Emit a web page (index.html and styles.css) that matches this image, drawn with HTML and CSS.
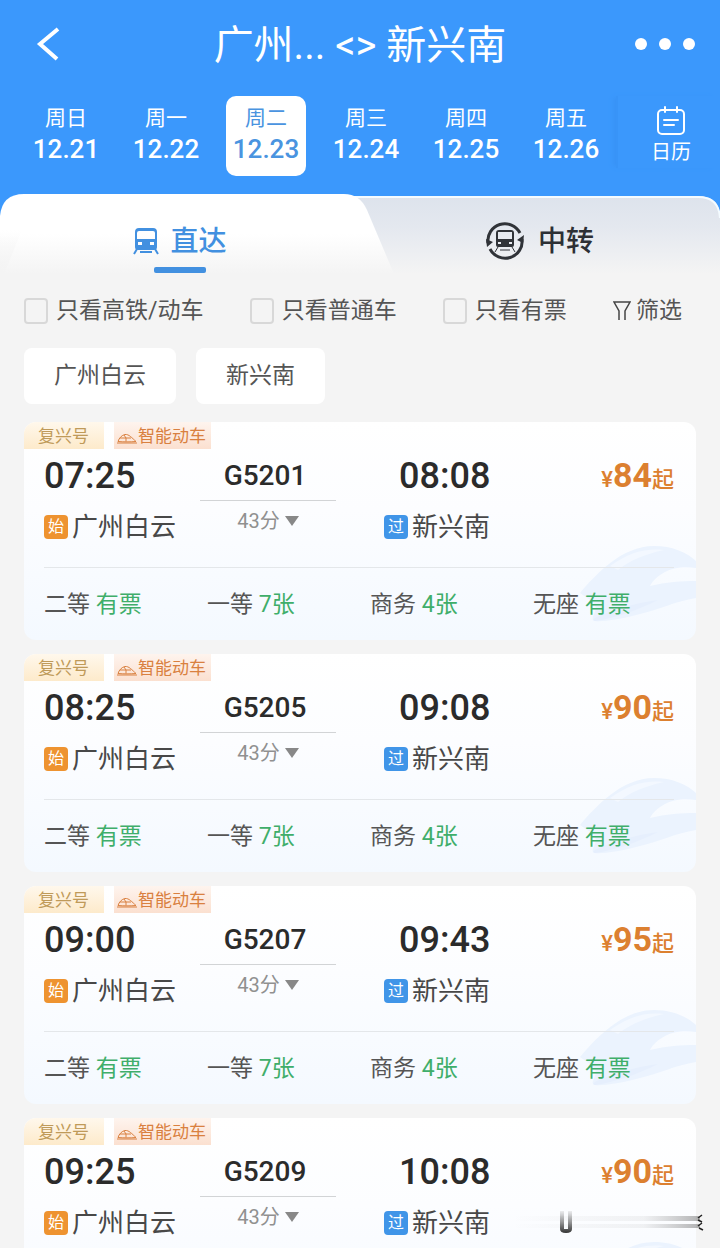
FILE: index.html
```html
<!DOCTYPE html>
<html lang="zh-CN">
<head>
  <meta charset="UTF-8" />
  <title>广州 - 新兴南</title>
  <meta name="viewport" content="width=device-width, initial-scale=1.0" />
  <link rel="stylesheet" href="styles.css">
</head>
<body>
  <!-- shared icons -->
  <svg class="defs" width="0" height="0" aria-hidden="true">
    <symbol id="icon-bullet" viewBox="0 0 20 11">
      <path d="M1 8.500C2 5 5 2 8 1.500C12 1 15 5 19 8.500C14 9 6 9 1 8.500ZM3 5H9V8.500M9 5H14M7 2L9 5M0 10H20" fill="none" stroke="currentColor" stroke-width="1" />
    </symbol>
    <symbol id="bg-train" viewBox="0 0 116 82">
      <path d="M0 49C16 30 42 2 74 2C92 2 106 8 116 17V24C104 22 92 24 85 28C78 32 73 36 70 42C86 38 102 37 116 37V54C96 57 78 66 60 70C42 75 22 78 15 77C8 75 20 66 14 60C10 55 4 52 0 49Z" fill="#ebf3fe" />
      <path d="M30 22C50 8 66 4 84 6C66 10 50 16 38 26Z" fill="#f3f8ff" />
      <path d="M15 77C36 74 58 66 78 56C60 58 40 64 24 70C16 73 10 76 15 77Z" fill="#e6effd" />
    </symbol>
  </svg>

  <div class="app">
    <header class="header">
      <div class="nav">
        <button class="nav-btn" aria-label="返回">
          <svg width="26" height="36" viewBox="0 0 26 36"><path d="M24 3L6 18L23 33" fill="none" stroke="#fff" stroke-width="4" /></svg>
        </button>
        <h1>广州... &lt;&gt; 新兴南</h1>
        <button class="nav-btn more" aria-label="更多">
          <svg width="62" height="14" viewBox="0 0 62 14" fill="#fff"><circle cx="7" cy="7" r="6" /><circle cx="31" cy="7" r="6" /><circle cx="55" cy="7" r="6" /></svg>
        </button>
      </div>

      <div class="dates">
        <button class="date"><span>周日</span><b>12.21</b></button>
        <button class="date"><span>周一</span><b>12.22</b></button>
        <button class="date active"><span>周二</span><b>12.23</b></button>
        <button class="date"><span>周三</span><b>12.24</b></button>
        <button class="date"><span>周四</span><b>12.25</b></button>
        <button class="date"><span>周五</span><b>12.26</b></button>
        <button class="calendar">
          <svg width="30" height="30" viewBox="0 0 30 30" fill="none" stroke="#fff" stroke-width="2" stroke-linecap="round"><rect x="2" y="4" width="26" height="24" rx="4" /><path d="M9 1V6M21 1V6M8 14H22M8 19H18" /></svg>
          <span>日历</span>
        </button>
      </div>
    </header>

    <nav class="tabs">
      <svg class="tabs-bg" viewBox="0 0 720 80" preserveAspectRatio="none" aria-hidden="true">
        <defs>
          <linearGradient id="grey" x1="0" y1="0" x2="0" y2="1"><stop offset="0" stop-color="#dde3ec" /><stop offset="0.400" stop-color="#e4e8ef" /><stop offset="1" stop-color="#f4f4f4" /></linearGradient>
          <linearGradient id="white" x1="0" y1="0" x2="0" y2="1"><stop offset="0.500" stop-color="#fff" /><stop offset="1" stop-color="#f4f4f4" /></linearGradient>
          <linearGradient id="edge" x1="0" y1="0" x2="0" y2="1"><stop offset="0" stop-color="#f4f4f4" stop-opacity="0" /><stop offset="1" stop-color="#f4f4f4" /></linearGradient>
        </defs>
        <path d="M340 2H698Q720 2 720 24V80H340Z" fill="url(#grey)" />
        <path d="M350 3H698Q719 3 720 24" fill="none" stroke="#f4fbff" stroke-width="2" />
        <path d="M0 80V22Q2 0 24 0H344Q360 0 367 16L394 80Z" fill="url(#white)" />
        <path d="M0 36H22L4 80H0Z" fill="url(#edge)" />
      </svg>
      <button class="tab active">
        <svg width="26" height="28" viewBox="0 0 26 28">
          <path fill="#4290e0" fill-rule="evenodd" d="M6 1H20Q24 1 24 5V20Q24 23 21 23H5Q2 23 2 20V5Q2 1 6 1ZM6 4Q4 4 4 6V12H22V6Q22 4 20 4ZM5 15V18H9V15ZM17 15V18H21V15Z" />
          <path d="M4 22L1 27M22 22L25 27M7 25H19" fill="none" stroke="#4290e0" stroke-width="2" />
        </svg>
        <span>直达</span>
      </button>
      <button class="tab">
        <svg width="38" height="38" viewBox="0 0 38 38">
          <path d="M2 21A17 17 0 0 1 34 11M36 17A17 17 0 0 1 4 27" fill="none" stroke="#303338" stroke-width="3" />
          <path d="M0 17L7 20L1 25ZM38 13L31 18L37 21Z" fill="#303338" />
          <path fill="#303338" fill-rule="evenodd" d="M13 8H25Q28 8 28 11V23Q28 25 26 25H12Q10 25 10 23V11Q10 8 13 8ZM12 10V17H26V10ZM12 20V22H15V20ZM23 20V22H26V20Z" />
          <path d="M12 25L9 30M26 25L29 30M14 28H24" fill="none" stroke="#303338" stroke-width="1" />
        </svg>
        <span>中转</span>
      </button>
    </nav>

    <div class="filters">
      <label><input type="checkbox" />只看高铁/动车</label>
      <label><input type="checkbox" />只看普通车</label>
      <label><input type="checkbox" />只看有票</label>
      <button class="filter-btn">
        <svg width="18" height="20" viewBox="0 0 18 20" fill="none" stroke="#444" stroke-width="1.500"><path d="M6 19V10L1 1H17L12 10V19" /></svg>
        筛选
      </button>
    </div>

    <div class="stations">
      <button>广州白云</button>
      <button>新兴南</button>
    </div>

    <main class="trains">
      <article class="train">
        <svg class="train-bg" aria-hidden="true"><use href="#bg-train" /></svg>
        <div class="tags">
          <span class="tag">复兴号</span>
          <span class="tag smart"><svg width="20" height="11"><use href="#icon-bullet" /></svg>智能动车</span>
        </div>
        <div class="trip">
          <div class="from"><time>07:25</time><p><i>始</i>广州白云</p></div>
          <div class="number"><strong>G5201</strong><button>43分<span class="arrow"></span></button></div>
          <div class="to"><time>08:08</time><p><i>过</i>新兴南</p></div>
          <div class="price"><small>¥</small>84<small>起</small></div>
        </div>
        <div class="seats">
          <span>二等 <em>有票</em></span><span>一等 <em>7张</em></span><span>商务 <em>4张</em></span><span>无座 <em>有票</em></span>
        </div>
      </article>

      <article class="train">
        <svg class="train-bg" aria-hidden="true"><use href="#bg-train" /></svg>
        <div class="tags">
          <span class="tag">复兴号</span>
          <span class="tag smart"><svg width="20" height="11"><use href="#icon-bullet" /></svg>智能动车</span>
        </div>
        <div class="trip">
          <div class="from"><time>08:25</time><p><i>始</i>广州白云</p></div>
          <div class="number"><strong>G5205</strong><button>43分<span class="arrow"></span></button></div>
          <div class="to"><time>09:08</time><p><i>过</i>新兴南</p></div>
          <div class="price"><small>¥</small>90<small>起</small></div>
        </div>
        <div class="seats">
          <span>二等 <em>有票</em></span><span>一等 <em>7张</em></span><span>商务 <em>4张</em></span><span>无座 <em>有票</em></span>
        </div>
      </article>

      <article class="train">
        <svg class="train-bg" aria-hidden="true"><use href="#bg-train" /></svg>
        <div class="tags">
          <span class="tag">复兴号</span>
          <span class="tag smart"><svg width="20" height="11"><use href="#icon-bullet" /></svg>智能动车</span>
        </div>
        <div class="trip">
          <div class="from"><time>09:00</time><p><i>始</i>广州白云</p></div>
          <div class="number"><strong>G5207</strong><button>43分<span class="arrow"></span></button></div>
          <div class="to"><time>09:43</time><p><i>过</i>新兴南</p></div>
          <div class="price"><small>¥</small>95<small>起</small></div>
        </div>
        <div class="seats">
          <span>二等 <em>有票</em></span><span>一等 <em>7张</em></span><span>商务 <em>4张</em></span><span>无座 <em>有票</em></span>
        </div>
      </article>

      <article class="train">
        <svg class="train-bg" aria-hidden="true"><use href="#bg-train" /></svg>
        <div class="tags">
          <span class="tag">复兴号</span>
          <span class="tag smart"><svg width="20" height="11"><use href="#icon-bullet" /></svg>智能动车</span>
        </div>
        <div class="trip">
          <div class="from"><time>09:25</time><p><i>始</i>广州白云</p></div>
          <div class="number"><strong>G5209</strong><button>43分<span class="arrow"></span></button></div>
          <div class="to"><time>10:08</time><p><i>过</i>新兴南</p></div>
          <div class="price"><small>¥</small>90<small>起</small></div>
        </div>
      </article>
    </main>

    <svg class="smudge" width="192" height="26" viewBox="0 0 192 26" aria-hidden="true">
      <defs>
        <linearGradient id="fade"><stop offset="0" stop-color="#888" stop-opacity="0" /><stop offset="0.700" stop-color="#888" stop-opacity="0.100" /><stop offset="1" stop-color="#666" stop-opacity="0.500" /></linearGradient>
        <linearGradient id="drip" x1="0" y1="0" x2="0" y2="1"><stop offset="0" stop-color="#555" stop-opacity="0.100" /><stop offset="1" stop-color="#333" /></linearGradient>
      </defs>
      <path d="M0 7H188V12H0ZM0 15H188V19H0Z" fill="url(#fade)" />
      <path d="M48 2H52V20H56V2H60V20Q60 24 54 24Q48 24 48 20Z" fill="url(#drip)" />
      <path d="M186 9L190 6M186 11L190 13M186 17L190 14M187 19L191 21" stroke="#222" stroke-width="1.500" />
    </svg>
  </div>
</body>
</html>
```
FILE: styles.css
```css
* {
  box-sizing: border-box;
}

body {
  margin: 0;
  background-color: #f4f4f4;
  font-family: Roboto, "Noto Sans CJK SC", sans-serif;
  color: #555;
}

button {
  padding: 0;
  border: none;
  background: none;
  font: inherit;
  color: inherit;
  cursor: pointer;
}

.defs {
  position: absolute;
}

.app {
  position: relative;
  height: 100vh;
  overflow: hidden;
  display: flex;
  flex-direction: column;
}

.app > * {
  flex-shrink: 0;
}

/* header */
.header {
  height: 218px;
  margin-bottom: -24px;
  background-color: #3b98fc;
  color: #fff;
}

.nav {
  display: grid;
  grid-template-columns: 62px 1fr 62px;
  align-items: center;
  height: 88px;
  padding: 0 24px 0 34px;
}

.nav-btn {
  display: flex;
}

.nav h1 {
  margin: 0;
  padding: 4px 10px 0 0;
  font-size: 40px;
  line-height: 48px;
  font-weight: 400;
  text-align: center;
}

.dates {
  display: grid;
  grid-template-columns: repeat(7, 1fr);
  padding: 8px 4px 0 16px;
}

.date {
  width: 80px;
  height: 80px;
  display: flex;
  flex-direction: column;
  align-items: center;
  justify-self: center;
  padding-top: 7px;
  border-radius: 10px;
  font-size: 21px;
  line-height: 30px;
}

.date b {
  font-size: 26px;
  line-height: 32px;
  font-weight: 500;
}

.date.active {
  background-color: #fff;
  color: #4a94e0;
}

.calendar {
  display: flex;
  flex-direction: column;
  align-items: center;
  padding: 10px 0 0 8px;
  margin-bottom: 12px;
  border-left: 2px solid #3894f8;
  box-shadow: -4px 0 4px -2px #3892f5;
  font-size: 20px;
  line-height: 32px;
}

/* tabs */
.tabs {
  position: relative;
  display: grid;
  grid-template-columns: 1fr 1fr;
  height: 80px;
}

.tabs-bg {
  position: absolute;
  width: 100%;
  height: 100%;
}

.tab {
  position: relative;
  display: flex;
  align-items: center;
  justify-content: center;
  gap: 14px;
  padding-top: 14px;
  height: 80px;
  font-size: 28px;
  line-height: 36px;
  font-weight: 500;
  color: #2d3035;
}

.tab span {
  padding-top: 2px;
}

.tab.active {
  gap: 11px;
  color: #4290e0;
}

.tab.active::after {
  content: "";
  position: absolute;
  bottom: 1px;
  left: 50%;
  width: 52px;
  height: 6px;
  margin-left: -26px;
  border-radius: 2px;
  background-color: #4290e0;
}

/* filters */
.filters {
  display: flex;
  align-items: center;
  justify-content: space-between;
  height: 74px;
  padding: 0 38px 0 24px;
  font-size: 23px;
  line-height: 32px;
}

.filters label {
  display: flex;
  align-items: center;
  gap: 8px;
}

.filters input {
  appearance: none;
  width: 24px;
  height: 26px;
  margin: 0;
  border: 2px solid #d8d8d8;
  border-radius: 4px;
}

.filter-btn {
  display: flex;
  align-items: center;
  gap: 5px;
}

.stations {
  display: flex;
  gap: 20px;
  padding: 0 24px 18px;
}

.stations button {
  height: 56px;
  padding: 0 30px 6px;
  border-radius: 8px;
  background-color: #fff;
  font-size: 23px;
}

/* train list */
.trains {
  display: flex;
  flex-direction: column;
  gap: 14px;
  padding: 0 24px;
}

.train {
  position: relative;
  height: 218px;
  border-radius: 12px;
  background: linear-gradient(#fff, #fcfdff 40%, #f4f9ff);
  overflow: hidden;
}

.train-bg {
  position: absolute;
  right: 0;
  bottom: 14px;
  width: 116px;
  height: 82px;
}

.tags {
  display: flex;
  gap: 10px;
}

.tag {
  display: flex;
  align-items: center;
  height: 27px;
  padding: 0 15px 2px 14px;
  background: linear-gradient(#fff8ec, #fdeacb);
  font-size: 17px;
  color: #bf9a59;
}

.tag.smart {
  gap: 1px;
  padding: 0 5px 2px 3px;
  background: linear-gradient(#fef4ee, #fbe0d0);
  color: #d98040;
}

.tag svg {
  margin-top: 8px;
}

.trip {
  position: relative;
  display: grid;
  grid-template-columns: 156px 136px 1fr auto;
  height: 119px;
  margin: 0 22px 0 20px;
  border-bottom: 1px solid #e4e7ea;
}

.trip time {
  display: block;
  font-size: 36px;
  line-height: 54px;
  font-weight: 500;
  color: #2b2b2b;
}

.trip p {
  display: flex;
  align-items: center;
  gap: 4px;
  margin: 7px 0 0;
  font-size: 26px;
  line-height: 34px;
  color: #484848;
}

.trip i {
  width: 24px;
  height: 24px;
  border-radius: 4px;
  background-color: #ee9330;
  color: #fff;
  font-size: 16px;
  line-height: 23px;
  font-style: normal;
  text-align: center;
}

.to {
  padding-left: 48px;
}

.to time {
  padding-left: 15px;
}

.to i {
  background-color: #4095e8;
}

.number {
  display: flex;
  flex-direction: column;
  align-items: center;
  font-size: 20px;
  line-height: 40px;
  color: #909090;
}

.number strong {
  width: 100%;
  padding: 2px 6px 0 0;
  border-bottom: 1px solid #d2d4d6;
  font-size: 28px;
  line-height: 49px;
  font-weight: 500;
  text-align: center;
  color: #2b2b2b;
}

.number button {
  display: flex;
  align-items: center;
  gap: 5px;
}

.arrow {
  border: 7px solid transparent;
  border-top: 10px solid #888;
  border-bottom: 0;
}

.price {
  font-size: 34px;
  line-height: 52px;
  font-weight: 700;
  color: #dc8030;
}

.price small {
  font-size: 22px;
  font-weight: 500;
}

.seats {
  position: relative;
  display: grid;
  grid-template-columns: repeat(4, 1fr);
  padding: 20px 0 0 20px;
  font-size: 23px;
  line-height: 34px;
}

.seats em {
  font-style: normal;
  color: #3fae6a;
}

/* grey streak over the last row */
.smudge {
  position: absolute;
  right: 16px;
  bottom: 13px;
}
```
